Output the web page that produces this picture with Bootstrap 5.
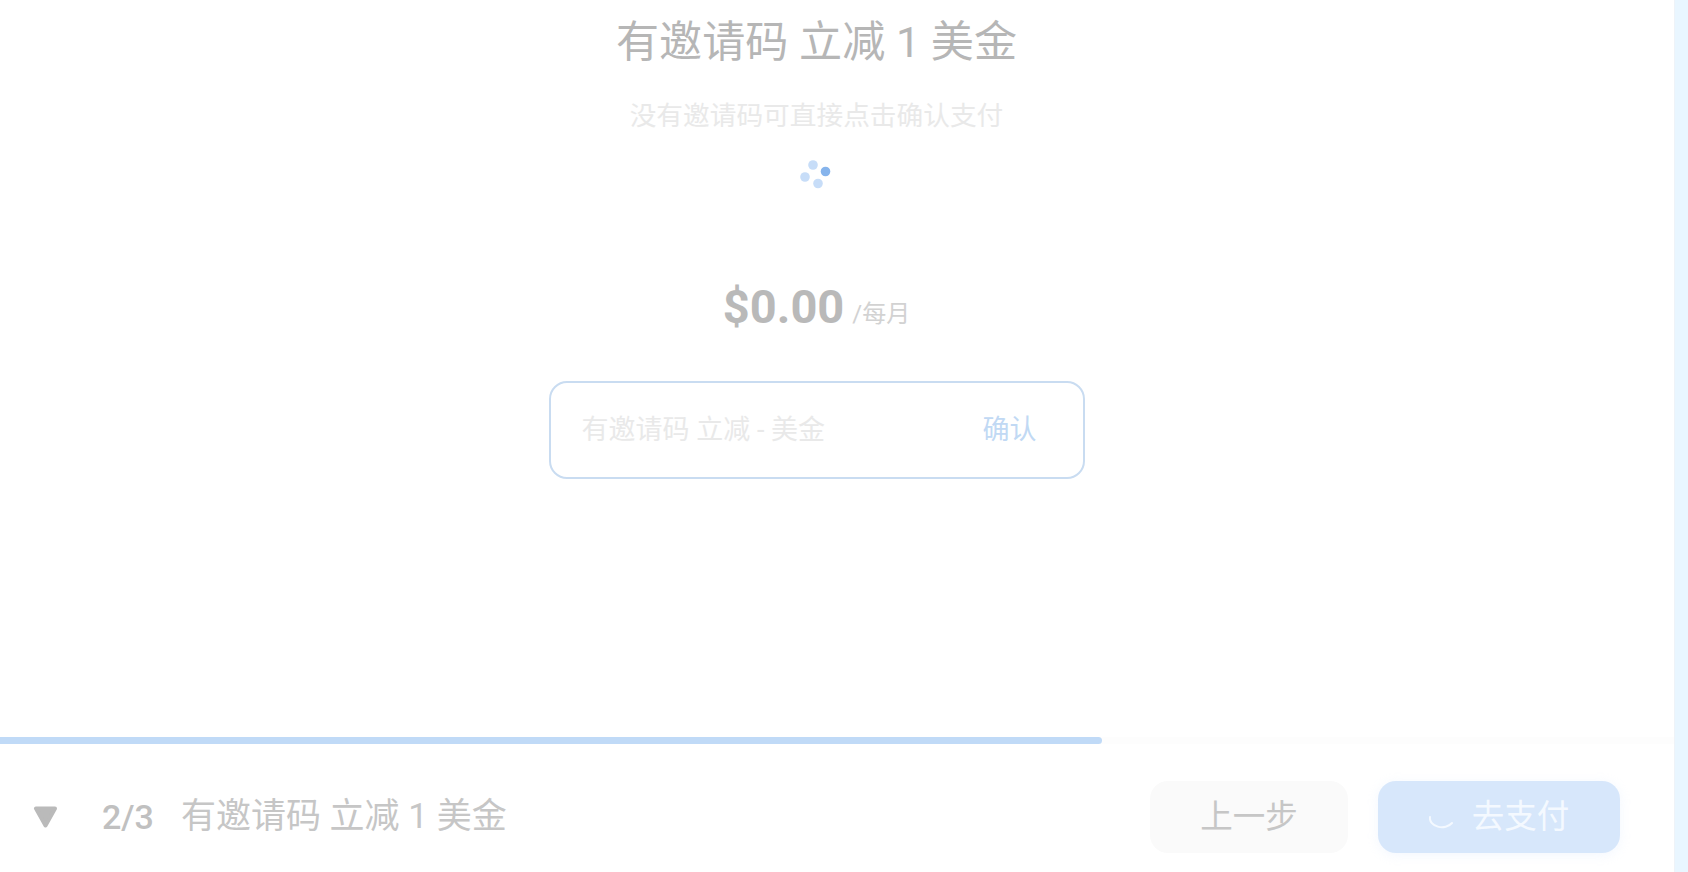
<!DOCTYPE html>
<html lang="zh-CN">
<head>
<meta charset="utf-8">
<title>有邀请码 立减 1 美金</title>
<link href="https://cdn.jsdelivr.net/npm/bootstrap@5.3.0/dist/css/bootstrap.min.css" rel="stylesheet">
<style>
html,body{height:872px;overflow:hidden;}
body{font-family:Roboto,"Noto Sans CJK SC",sans-serif;background:#fff;}
.strip{width:14px;background:#e9f6ff;border-left:1px solid #eef3f8;}
.pane{padding-right:41px;}
.wizard-title{font-size:43.100px;line-height:56px;margin:15px 0 0;color:#b6b6b6;font-weight:400;}
.wizard-sub{font-size:26.7px;line-height:36px;margin:27px 0 0;color:#e9e9e9;}
.loader-svg{display:block;margin:25px auto 0;width:36px;height:36px;}
.price-row{margin-top:82px;line-height:60px;color:#b9b9b9;}
.price-num{font-size:47px;font-weight:700;}
.price-unit{font-size:24px;color:#d2d2d2;margin-left:4px;vertical-align:1px;}
.code-box{width:536px;height:98px;margin:33px auto 0;padding:0 46px 0 31px;border:2px solid #c9dcf1;border-radius:18px;}
.code-ph{font-size:27px;color:#e9e9e9;}
.code-ok{font-size:27px;color:#c1d9f4;}
.track{height:7px;background:#fdfdfd;}
.track-fill{height:7px;background:#c0daf7;border-radius:0 4px 4px 0;}
.foot-bar{height:128px;padding:18px 54px 0 33px;}
.tri{width:25px;height:22px;margin-right:44px;}
.step-no{font-size:34px;font-weight:500;color:#c0c0c0;margin-right:27px;}
.step-name{font-size:35px;color:#c6c6c6;}
.btn.btn-back,.btn.btn-pay{width:198px;height:72px;border:0;border-radius:18px;font-size:32.500px;padding:0;display:flex;align-items:center;justify-content:center;}
.btn.btn-back{background:#fafafa;color:#c6c6c6;}
.btn.btn-pay{width:242px;background:#d7e7fb;color:#f4f9ff;margin-left:30px;box-shadow:0 2px 12px rgba(213,230,251,.3);}
.arc{width:26px;height:26px;margin-right:17px;}
</style>
</head>
<body class="d-flex">
<main class="flex-grow-1 d-flex flex-column">
  <section class="pane flex-grow-1 text-center">
    <h1 class="wizard-title">有邀请码 立减 1 美金</h1>
    <p class="wizard-sub">没有邀请码可直接点击确认支付</p>
    <svg class="loader-svg" viewBox="1 0 36 36" aria-hidden="true">
      <circle cx="15" cy="6" r="4.8" fill="#c7ddf8"/>
      <circle cx="27.5" cy="12.5" r="4.8" fill="#86b4ec"/>
      <circle cx="20" cy="24.5" r="4.8" fill="#c7ddf8"/>
      <circle cx="7" cy="18" r="4.8" fill="#c7ddf8"/>
    </svg>
    <div class="price-row"><span class="price-num">$0.00</span> <span class="price-unit">/每月</span></div>
    <div class="code-box d-flex align-items-center justify-content-between">
      <span class="code-ph">有邀请码 立减 - 美金</span>
      <span class="code-ok">确认</span>
    </div>
  </section>
  <div class="track"><div class="track-fill" style="width:1102px"></div></div>
  <footer class="foot-bar d-flex align-items-center justify-content-between">
    <div class="d-flex align-items-center">
      <svg class="tri" viewBox="0 0 25 22" aria-hidden="true"><path d="M3 2.500h19L12.500 19.500z" fill="#bababa" stroke="#bababa" stroke-width="4" stroke-linejoin="round"/></svg>
      <span class="step-no">2/3</span>
      <span class="step-name">有邀请码 立减 1 美金</span>
    </div>
    <div class="d-flex">
      <button type="button" class="btn btn-back">上一步</button>
      <button type="button" class="btn btn-pay">
        <svg class="arc" viewBox="0 0 26 26" aria-hidden="true"><path d="M1 13a12 9 0 0 0 22 6" fill="none" stroke="#f4f9ff" stroke-width="2" stroke-linecap="round"/></svg>去支付</button>
    </div>
  </footer>
</main>
<aside class="strip"></aside>
<script src="https://cdn.jsdelivr.net/npm/bootstrap@5.3.0/dist/js/bootstrap.bundle.min.js"></script>
</body>
</html>
